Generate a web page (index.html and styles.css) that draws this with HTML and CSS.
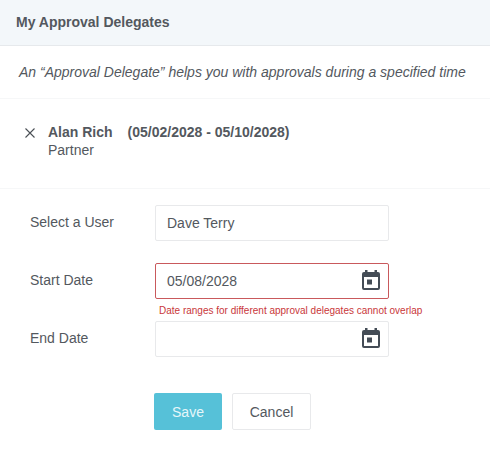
FILE: index.html
```html
<!DOCTYPE html>
<html lang="en">
<head>
  <meta charset="UTF-8">
  <meta name="viewport" content="width=device-width, initial-scale=1.0">
  <title>My Approval Delegates</title>
  <link rel="stylesheet" href="styles.css">
</head>
<body>
  <div class="header">My Approval Delegates</div>
  <div class="intro">An “Approval Delegate” helps you with approvals during a specified time</div>

  <div class="delegate">
    <svg class="remove" width="10" height="10" viewBox="0 0 10 10">
      <path d="M0.5 0.5L9.5 9.5M9.5 0.5L0.5 9.5" stroke="#4a4f55" stroke-width="1.1" fill="none"/>
    </svg>
    <div class="delegate-info">
      <div class="delegate-name"><span>Alan Rich</span><span>(05/02/2028 - 05/10/2028)</span></div>
      <div class="delegate-role">Partner</div>
    </div>
  </div>

  <form class="form">
    <div class="row">
      <label class="label">Select a User</label>
      <div class="field">Dave Terry</div>
    </div>

    <div class="row row-error">
      <label class="label">Start Date</label>
      <div class="field field-error">
        05/08/2028
        <svg class="cal" width="18" height="20" viewBox="0 0 18 20">
          <path d="M3 0h2.5v2h7V0H15v2h1a2 2 0 0 1 2 2v14a2 2 0 0 1-2 2H2a2 2 0 0 1-2-2V4a2 2 0 0 1 2-2h1zM2 7v11h14V7z" fill="#444c56" fill-rule="evenodd"/>
          <rect x="5" y="9.5" width="5" height="5" fill="#444c56"/>
        </svg>
      </div>
    </div>
    <div class="error">Date ranges for different approval delegates cannot overlap</div>

    <div class="row">
      <label class="label">End Date</label>
      <div class="field">
        <svg class="cal" width="18" height="20" viewBox="0 0 18 20">
          <path d="M3 0h2.5v2h7V0H15v2h1a2 2 0 0 1 2 2v14a2 2 0 0 1-2 2H2a2 2 0 0 1-2-2V4a2 2 0 0 1 2-2h1zM2 7v11h14V7z" fill="#444c56" fill-rule="evenodd"/>
          <rect x="5" y="9.5" width="5" height="5" fill="#444c56"/>
        </svg>
      </div>
    </div>

    <div class="buttons">
      <button type="button" class="button button-save">Save</button>
      <button type="button" class="button button-cancel">Cancel</button>
    </div>
  </form>
</body>
</html>
```

FILE: styles.css
```css
* {
  margin: 0;
  padding: 0;
  box-sizing: border-box;
  font-family: "Liberation Sans", Arial, sans-serif;
}

body {
  background-color: #ffffff;
  color: #53585e;
  font-size: 14px;
}

.header {
  height: 46px;
  padding: 14px 16px 0;
  background-color: #f3f7fa;
  border-bottom: 1px solid #e6e9ec;
  font-weight: bold;
  font-size: 14px;
  line-height: 16px;
}

.intro {
  height: 53px;
  padding: 18px 19px 0;
  border-bottom: 1px solid #f6f7f8;
  font-style: italic;
  font-size: 14px;
  line-height: 16px;
}

.delegate {
  display: flex;
  height: 90px;
  padding: 24px 0 0 25px;
  border-bottom: 1px solid #f6f7f8;
}

.remove {
  margin: 5px 13px 0 0;
}

.delegate-info {
  line-height: 18px;
}

.delegate-name {
  display: flex;
  gap: 15px;
  font-weight: bold;
}

.form {
  padding-top: 16px;
}

.row {
  display: flex;
  align-items: center;
  padding-left: 30px;
  margin-bottom: 22px;
}

.row-error {
  margin-bottom: 0;
}

.label {
  width: 125px;
  margin-top: -2px;
  font-size: 14px;
}

.field {
  position: relative;
  display: flex;
  align-items: center;
  width: 234px;
  height: 36px;
  padding: 0 11px;
  border: 1px solid #e8e9eb;
  border-radius: 2px;
  font-size: 14px;
}

.field-error {
  border-color: #c9595c;
}

.cal {
  position: absolute;
  right: 8px;
  top: 6px;
}

.error {
  height: 22px;
  padding: 6px 0 0 159px;
  color: #c9373a;
  font-size: 10px;
  line-height: 12px;
}

.buttons {
  display: flex;
  gap: 10px;
  padding: 14px 0 0 154px;
}

.button {
  height: 37px;
  border-radius: 2px;
  font-size: 14px;
  cursor: pointer;
}

.button-save {
  width: 68px;
  border: none;
  background-color: #56c1d8;
  color: #e6f7fa;
}

.button-cancel {
  width: 79px;
  border: 1px solid #e8e9eb;
  background-color: #ffffff;
  color: #53585e;
}
```
